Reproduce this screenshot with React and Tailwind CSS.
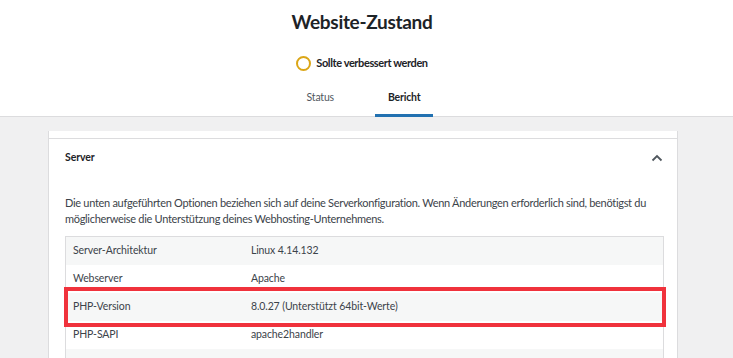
import React from "react";

const rows = [
  ["Server-Architektur", "Linux 4.14.132"],
  ["Webserver", "Apache"],
  ["PHP-Version", "8.0.27 (Unterstützt 64bit-Werte)"],
  ["PHP-SAPI", "apache2handler"],
  ["", ""],
];

export default function App() {
  return (
    <div
      className="w-[733px] h-[358px] overflow-hidden bg-[#f0f0f1] text-[#3c434a]"
      style={{ fontFamily: 'Lato, "Noto Sans", sans-serif' }}
    >
      <header className="bg-white border-b border-[#dcdcde] h-[117px] flex flex-col items-center pr-[9px]">
        <h1 className="mt-[8px] h-[28px] leading-[28px] text-[19px] tracking-[-0.3px] font-bold text-[#1d2327]">
          Website-Zustand
        </h1>
        <div className="mt-[19px] h-[17px] flex items-center gap-[5px]">
          <span className="block w-[15px] h-[15px] rounded-full border-2 border-[#dba617]" />
          <span className="text-[11px] tracking-[-0.4px] font-bold text-[#1d2327]">Sollte verbessert werden</span>
        </div>
        <nav className="mt-[16px] flex gap-[28px] h-[29px] pl-[3px]">
          <div className="px-[13px] h-[29px] leading-[18px] text-[10.5px] tracking-[-0.2px] text-[#50575e] border-b-[3px] border-transparent">
            Status
          </div>
          <div className="px-[13px] h-[29px] leading-[18px] text-[10.5px] tracking-[-0.2px] font-bold text-[#1d2327] border-b-[3px] border-[#2271b1]">
            Bericht
          </div>
        </nav>
      </header>
      <main className="pt-[14px] pl-[48px]">
        <section className="w-[630px] bg-white border-x border-[#dcdcde] h-[240px]">
          <div className="h-[7px]" />
          <div className="border-t border-[#dcdcde]">
            <div className="h-[38px] flex items-center justify-between pl-[16px] pr-[14px]">
              <span className="text-[10.5px] tracking-[-0.1px] font-bold text-[#1d2327]">Server</span>
              <svg width="12" height="8" viewBox="0 0 12 8" className="text-[#50575e]">
                <path d="M1.5 6.5 L6 2 L10.5 6.5" fill="none" stroke="currentColor" strokeWidth="1.8" />
              </svg>
            </div>
            <div className="pt-[18px] px-[16px]">
              <p className="text-[11px] tracking-[-0.3px] leading-[16px] text-[#3c434a]">
                Die unten aufgeführten Optionen beziehen sich auf deine Serverkonfiguration. Wenn Änderungen erforderlich sind, benötigst du möglicherweise die Unterstützung deines Webhosting-Unternehmens.
              </p>
              <div className="relative mt-[9px] w-[599px]">
                <table className="w-full border border-[#dcdcde] border-collapse text-[10.5px] tracking-[-0.1px] text-[#3c434a]">
                  <tbody>
                    {rows.map(([k, v], i) => (
                      <tr key={i} className={i % 2 === 0 ? "bg-[#f6f7f7] h-[28px]" : "bg-white h-[28px]"}>
                        <td className="w-[30%] pl-[7px] align-middle">{k}</td>
                        <td className="pl-[6px] align-middle">{v}</td>
                      </tr>
                    ))}
                  </tbody>
                </table>
                <div className="absolute left-[-1px] top-[51px] w-[602px] h-[40px] border-4 border-[#f0323c]" />
              </div>
            </div>
          </div>
        </section>
      </main>
    </div>
  );
}
